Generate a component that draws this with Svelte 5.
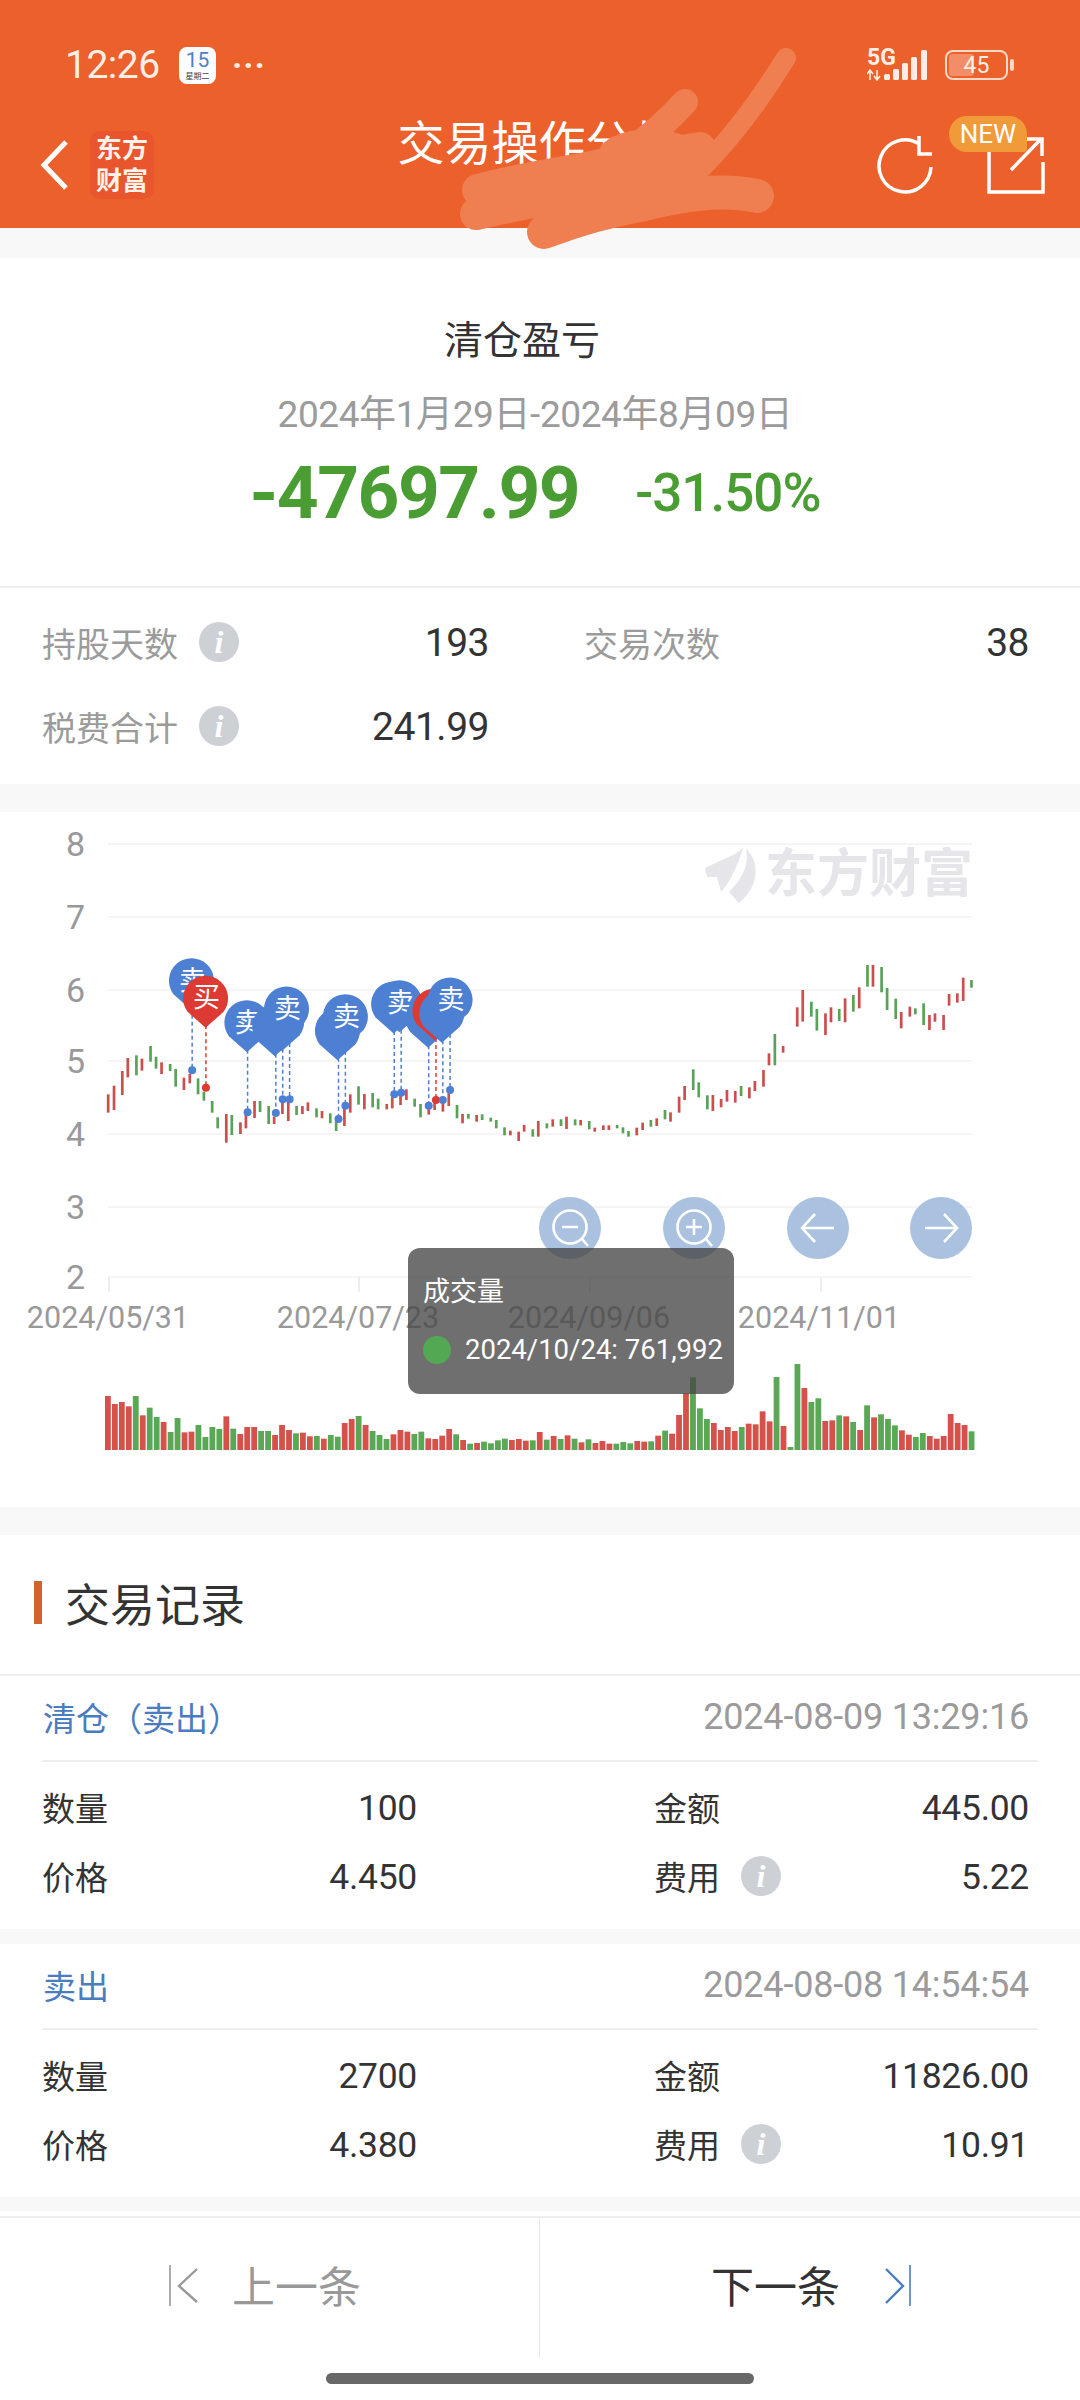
<script>
  // candles: x (zoom units), top, bottom, r/g
  const candleSrc = `314 853 908 r,331 827 900 r,355 783 855 r,371 744 802 r,396 736 796 g,412 746 782 r,437 708 755 g,453 740 776 g,469 757 792 r,494 762 783 g,510 777 830 g,534 803 840 r,551 792 820 r,575 805 853 g,592 845 872 g,616 873 908 g,632 922 955 g,657 912 998 r,673 915 975 g,698 937 972 r,714 915 955 r,739 873 924 r,755 873 906 g,780 888 942 g,796 920 942 r,820 870 912 r,837 875 933 r,861 888 915 g,878 888 912 r,894 877 903 r,919 895 922 g,935 903 925 r,959 910 940 g,976 935 963 g,1000 895 948 r,1017 853 908 r,1041 829 884 g,1058 852 898 r,1082 849 892 g,1098 866 898 g,1123 882 898 r,1139 862 895 r,1163 850 885 r,1180 838 870 r,1204 866 890 g,1221 882 922 g,1245 890 914 r,1262 875 900 r,1286 875 905 r,1303 850 888 r,1327 885 925 g,1343 912 940 r,1360 912 926 g,1384 915 935 r,1400 913 930 g,1425 923 935 g,1441 930 955 g,1465 952 976 g,1482 962 976 r,1506 965 993 r,1522 945 965 r,1547 958 980 g,1563 933 980 r,1588 940 955 g,1605 928 950 r,1629 928 948 g,1645 920 957 r,1670 928 946 g,1686 930 946 r,1711 933 958 g,1727 953 965 r,1752 946 960 r,1768 946 960 r,1792 945 955 g,1809 952 970 g,1825 963 980 g,1849 953 976 r,1866 938 960 r,1890 930 950 g,1907 925 948 r,1931 900 928 g,1947 907 935 r,1972 860 908 r,1988 828 870 r,2013 778 840 g,2029 817 862 g,2054 856 898 g,2070 855 903 r,2094 867 892 r,2111 840 875 r,2135 843 878 r,2152 828 858 g,2176 832 865 r,2192 813 843 r,2217 780 830 r,2233 730 766 r,2250 672 766 g,2274 708 728 r,2315 592 650 r,2331 540 635 r,2356 575 620 g,2372 597 662 g,2397 610 675 r,2413 592 637 r,2437 597 633 g,2454 565 637 r,2478 555 605 g,2495 532 595 r,2519 465 530 g,2535 465 530 r,2560 471 547 g,2576 534 600 g,2601 566 627 g,2617 606 655 r,2642 590 620 r,2658 595 613 g,2682 580 645 g,2699 615 660 r,2715 610 635 r,2740 615 660 r,2756 552 587 r,2780 550 578 r,2797 503 573 r,2821 510 533 g`;
  const candles = candleSrc.split(",").map((s) => {
    const [x, a, b, c] = s.split(" ");
    return { x: +x / 2.904, y: 810 + a / 3, h: (b - a) / 3, c };
  });

  // volume bars: top in zoom units, left to right
  const volSrc = `468r 492r 486r 499r 468g 526r 503g 531g 546r 576g 534g 577r 575r 555g 591g 561g 567g 529r 566g 582r 561r 561r 573g 573g 585r 555r 570r 580g 578r 589r 588g 596r 585g 590g 549r 537r 528g 555r 573g 585g 597g 583r 570r 575r 582g 575g 595r 597r 587r 567r 583g 600r 611g 609r 605g 610g 601g 596g 600r 597r 602r 601g 576r 599g 588r 597g 586r 596g 607r 598g 609r 603r 611r 611g 606g 610g 603r 605r 604g 587r 572g 581r 525r 460r 412g 505g 537g 549r 570r 561r 573r 561g 551r 553r 514r 544r 411g 558r 621g 372g 444r 486g 475g 543r 541r 526g 529r 546g 570r 496g 532r 523g 537g 556g 571r 584r 591g 579g 588r 596r 588r 522r 549r 555r 574g`;
  const bars = volSrc.split(" ").map((s, i) => {
    const top = parseInt(s);
    return { x: 105 + i * 6.965, y: 1240 + top / 3, h: 210 - top / 3, c: s.slice(-1) };
  });

  const yLabels = [
    ["8", 844], ["7", 917], ["6", 990], ["5", 1061], ["4", 1134], ["3", 1207], ["2", 1277],
  ];
  const xLabels = [["2024/05/31", 108], ["2024/07/23", 358], ["2024/09/06", 589], ["2024/11/01", 819]];
  const ticks = [108, 358, 589, 820];

  // pins: line x, circle x, circle y, dot y, type, has label (zoom units)
  const pinSrc = [
    [558, 556, 512, 781, "s", 1],
    [598, 597, 565, 833, "b", 1],
    [719, 717, 638, 907, "s", 1],
    [801, 798, 650, 909, "s", 0],
    [821, 818, 635, 868, "s", 0],
    [841, 832, 597, 868, "s", 1],
    [983, 980, 662, 927, "s", 0],
    [1003, 1003, 620, 887, "s", 1],
    [1145, 1143, 582, 853, "s", 0],
    [1165, 1160, 578, 848, "s", 1],
    [1245, 1243, 625, 887, "s", 0],
    [1266, 1263, 603, 870, "b", 0],
    [1286, 1283, 610, 870, "s", 0],
    [1307, 1307, 570, 840, "s", 1],
  ];
  const pins = pinSrc.map(([lx, cx, cy, dy, type, label]) => ({
    lx: lx / 2.904,
    cx: cx / 2.904,
    cy: 810 + cy / 3,
    dy: 810 + dy / 3,
    color: type === "b" ? "#dd3a33" : "#4d7fd2",
    text: type === "b" ? "买" : "卖",
    label,
  }));

  function pinPath(p) {
    const r = 22.5;
    const dx = r * 0.8;
    const sy = p.cy + r * 0.6;
    return `M${p.cx - dx} ${sy}A${r} ${r} 0 1 1 ${p.cx + dx} ${sy}L${p.cx} ${p.cy + r + 7}Z`;
  }

  const stats = [
    { label: "持股天数", info: true, value: "193" },
    { label: "交易次数", info: false, value: "38" },
    { label: "税费合计", info: true, value: "241.99" },
  ];

  const records = [
    { type: "清仓（卖出）", time: "2024-08-09 13:29:16", qty: "100", amount: "445.00", price: "4.450", fee: "5.22" },
    { type: "卖出", time: "2024-08-08 14:54:54", qty: "2700", amount: "11826.00", price: "4.380", fee: "10.91" },
  ];
</script>

{#snippet info()}
  <span class="info">i</span>
{/snippet}

<div class="page">
  <header class="top">
    <div class="status">
      <div class="status-left">
        <span class="clock">12:26</span>
        <span class="cal"><b>15</b><i>星期二</i></span>
        <span class="dots">···</span>
      </div>
      <div class="status-right">
        <svg width="64" height="34" viewBox="0 0 64 34">
          <text x="0" y="17" class="fiveg">5G</text>
          <path d="M3 22v10M0 26l3-4 3 4M10 32V22M7 28l3 4 3-4" stroke="#fdeee5" stroke-width="1.6" fill="none" />
          <g fill="#fdeee5">
            <rect x="17" y="26" width="6" height="6" rx="1.5" />
            <rect x="26" y="21" width="6" height="11" rx="1.5" />
            <rect x="35" y="15" width="6" height="17" rx="1.5" />
            <rect x="44" y="9" width="6" height="23" rx="1.5" />
            <rect x="54" y="2" width="6" height="30" rx="1.5" />
          </g>
        </svg>
        <span class="battery"><span class="battery-fill"></span><span class="battery-num">45</span></span>
        <span class="nub"></span>
      </div>
    </div>
    <nav class="nav">
      <div class="nav-left">
        <svg width="30" height="50" viewBox="0 0 30 50">
          <path d="M26 2L4 25l22 23" fill="none" stroke="#fff" stroke-width="5" />
        </svg>
        <span class="logo">东方<br />财富</span>
      </div>
      <h1>交易操作分析</h1>
      <div class="nav-right">
        <svg width="58" height="60" viewBox="0 0 58 60">
          <path d="M42 9A26 26 0 1 0 54 32" fill="none" stroke="#fff" stroke-width="3.5" />
          <path d="M42 1V19H55" fill="none" stroke="#fff" stroke-width="3.5" />
        </svg>
        <span class="share">
          <svg width="58" height="58" viewBox="0 0 58 58">
            <path d="M32 8H2V56H56V26" fill="none" stroke="#fff" stroke-width="3.5" />
            <path d="M24 34L54 3M38 3H55V20" fill="none" stroke="#fff" stroke-width="3.5" />
          </svg>
          <span class="new">NEW</span>
        </span>
      </div>
    </nav>
  </header>

  <section class="summary">
    <div class="sum-title">清仓盈亏</div>
    <div class="sum-date">2024年1月29日-2024年8月09日</div>
    <div class="sum-nums">
      <span class="big">-47697.99</span>
      <span class="pct">-31.50%</span>
    </div>
  </section>

  <section class="stats">
    {#each stats as s}
      <div class="stat">
        <span class="stat-label">{s.label}</span>
        {#if s.info}{@render info()}{/if}
        <span class="stat-val">{s.value}</span>
      </div>
    {/each}
  </section>

  <section class="chart">
    <svg width="1080" height="695" viewBox="0 812 1080 695">
      <!-- watermark -->
      <g fill="#e6e6ea">
        <path d="M705 868C720 860 735 856 743 848C737 868 729 884 721 892L717 877L707 877Z" />
        <path d="M746 849C759 860 761 885 739 903L729 892C743 878 749 865 746 849Z" />
      </g>
      <text x="765" y="892" class="mark">东方财富</text>

      {#each yLabels as [t, y]}
        <rect x="108" y={y - 1} width="864" height="2" fill="#f5f5f5" />
        <text x="85" y={y + 12} class="ylab" text-anchor="end">{t}</text>
      {/each}
      {#each ticks as x}
        <rect {x} y="1277" width="2" height="15" fill="#ededed" />
      {/each}
      {#each xLabels as [t, x]}
        <text {x} y="1328" class="axis" text-anchor="middle">{t}</text>
      {/each}

      {#each candles as k}
        <rect x={k.x - 1.3} y={k.y} width="2.7" height={k.h} fill={k.c === "r" ? "#cb4f4e" : "#5aa258"} />
      {/each}

      {#each bars as b}
        <rect x={b.x} y={b.y} width="5.8" height={b.h} fill={b.c === "r" ? "#d5524c" : "#5aa855"} />
      {/each}

      {#each pins as p}
        <line x1={p.lx} x2={p.lx} y1={p.cy + 20} y2={p.dy} stroke={p.color} stroke-width="1.5" stroke-dasharray="4 3" />
        <circle cx={p.lx} cy={p.dy} r="4" fill={p.color} />
      {/each}
      {#each pins as p}
        <path d={pinPath(p)} fill={p.color} />
        {#if p.label}
          <text x={p.cx + 1} y={p.cy + 9} class="pin-text" text-anchor="middle">{p.text}</text>
        {/if}
      {/each}

      <g fill="#aac1e0">
        <circle cx="570" cy="1228" r="31" />
        <circle cx="694" cy="1228" r="31" />
        <circle cx="818" cy="1228" r="31" />
        <circle cx="941" cy="1228" r="31" />
      </g>
      <g fill="none" stroke="#fff" stroke-width="2.6">
        <circle cx="570" cy="1227" r="16.5" />
        <path d="M562 1227H578M582 1239L588 1246" />
        <circle cx="694" cy="1227" r="16.5" />
        <path d="M686 1227H702M694 1219V1235M706 1239L712 1246" />
        <path d="M802 1228H834M815 1214L802 1228L815 1242" />
        <path d="M925 1228H957M944 1214L957 1228L944 1242" />
      </g>
    </svg>
    <div class="tooltip">
      <div class="tip-title">成交量</div>
      <div class="tip-row"><span class="tip-dot"></span>2024/10/24: 761,992</div>
    </div>
  </section>

  <section class="heading">
    <span class="heading-bar"></span>
    <h2>交易记录</h2>
  </section>

  {#each records as r}
    <section class="record">
      <div class="rec-head">
        <span class="rec-type">{r.type}</span>
        <span class="rec-time">{r.time}</span>
      </div>
      <div class="rec-body">
        <div class="cell"><span>数量</span><em>{r.qty}</em></div>
        <div class="cell"><span>金额</span><em>{r.amount}</em></div>
        <div class="cell"><span>价格</span><em>{r.price}</em></div>
        <div class="cell"><span>费用</span>{@render info()}<em>{r.fee}</em></div>
      </div>
    </section>
  {/each}

  <footer class="foot">
    <div class="foot-bar">
      <div class="pager prev">
        <svg width="30" height="42" viewBox="0 0 30 42">
          <path d="M1 0V41" stroke="#999" stroke-width="1.6" />
          <path d="M28 4L10 21l18 16" fill="none" stroke="#999" stroke-width="2.4" />
        </svg>
        <span>上一条</span>
      </div>
      <div class="pager next">
        <span>下一条</span>
        <svg width="28" height="42" viewBox="0 0 28 42">
          <path d="M2 4L19 21 2 38" fill="none" stroke="#4a7cc0" stroke-width="2.4" />
          <path d="M26 0V41" stroke="#4a7cc0" stroke-width="1.6" />
        </svg>
      </div>
    </div>
    <div class="home"></div>
  </footer>

  <svg class="scribble" width="1080" height="260" viewBox="0 0 1080 260">
    <rect x="565" y="198" width="14" height="10" fill="#fff" />
    <g fill="none" stroke="#ef7f50" stroke-linecap="round" stroke-linejoin="round">
      <path d="M786 58C760 100 730 140 700 170" stroke-width="20" />
      <path d="M685 102C650 140 620 160 590 170" stroke-width="26" />
      <path d="M478 190C520 178 570 172 600 165L700 148" stroke-width="32" />
      <path d="M476 214C540 200 620 185 690 176" stroke-width="32" />
      <path d="M544 232C570 222 600 212 640 205C680 195 720 188 757 196" stroke-width="34" />
    </g>
    <ellipse cx="650" cy="155" rx="52" ry="26" fill="#ef7f50" />
  </svg>
</div>

<style>
  :global(body) {
    background: #f8f8f8;
  }

  .page {
    position: relative;
    width: 1080px;
    height: 2400px;
    overflow: hidden;
    font-family: Roboto, "Noto Sans CJK SC", sans-serif;
    color: #333;
  }

  .top {
    height: 228px;
    background: #ec602c;
    color: #fff;
    box-sizing: border-box;
    padding-top: 46px;
  }

  .status {
    height: 38px;
    display: flex;
    justify-content: space-between;
    align-items: center;
    padding: 0 66px 0 65px;
    color: #fdeee5;
  }

  .status-left,
  .status-right {
    display: flex;
    align-items: center;
  }

  .clock {
    font-size: 39px;
    width: 114px;
    letter-spacing: -0.5px;
  }

  .cal {
    width: 37px;
    height: 37px;
    border-radius: 8px;
    background: #fbfcfe;
    display: flex;
    flex-direction: column;
    align-items: center;
    line-height: 1;
  }

  .cal b {
    font-weight: 400;
    font-size: 21px;
    color: #4f7fc4;
    margin-top: 3px;
  }

  .cal i {
    font-style: normal;
    font-size: 8px;
    color: #444;
    margin-top: 2px;
  }

  .dots {
    font-size: 34px;
    font-weight: 700;
    margin-left: 16px;
    letter-spacing: 1px;
    line-height: 1;
  }

  .fiveg {
    font-size: 23px;
    font-weight: 700;
    fill: #fdeee5;
  }

  .battery {
    position: relative;
    width: 63px;
    height: 30px;
    margin-left: 14px;
    box-sizing: border-box;
    border: 2.5px solid #fbd9c6;
    border-radius: 8px;
    display: flex;
    align-items: center;
    justify-content: center;
  }

  .battery-fill {
    position: absolute;
    left: 2px;
    top: 2px;
    bottom: 2px;
    width: 25px;
    border-radius: 3px;
    background: #f28d68;
  }

  .battery-num {
    position: relative;
    font-size: 23px;
    color: #fdeee5;
  }

  .nub {
    width: 4px;
    height: 12px;
    margin-left: 2px;
    border-radius: 2px;
    background: #fbd9c6;
  }

  .nav {
    display: grid;
    grid-template-columns: 1fr auto 1fr;
    align-items: center;
    padding: 47px 35px 0 40px;
  }

  .nav-left,
  .nav-right {
    display: flex;
    align-items: center;
  }

  .nav-left {
    gap: 20px;
  }

  .nav-right {
    justify-content: flex-end;
    gap: 52px;
  }

  .logo {
    width: 64px;
    height: 68px;
    border-radius: 10px;
    background: #e9552d;
    font-size: 26px;
    font-weight: 700;
    line-height: 32px;
    text-align: center;
    box-sizing: border-box;
    padding-top: 2px;
    color: #fff2ea;
  }

  h1 {
    margin: -42px 8px 0 0;
    font-size: 47px;
    font-weight: 400;
    line-height: 60px;
  }

  .share {
    position: relative;
    display: block;
    height: 58px;
  }

  .new {
    position: absolute;
    left: -38px;
    top: -20px;
    width: 78px;
    height: 36px;
    border-radius: 18px 18px 3px 18px;
    background: #f09a3a;
    color: #fff;
    font-size: 26px;
    line-height: 36px;
    text-align: center;
  }

  .summary {
    margin-top: 30px;
    height: 328px;
    background: #fff;
    box-sizing: border-box;
    padding-top: 60px;
    display: flex;
    flex-direction: column;
    align-items: center;
  }

  .sum-title {
    font-size: 39px;
    line-height: 46px;
    color: #333;
    margin-left: -36px;
  }

  .sum-date {
    font-size: 37px;
    line-height: 40px;
    margin: 31px 0 0 -10px;
    color: #9b9b9b;
    letter-spacing: -0.4px;
  }

  .sum-nums {
    margin: 18px 0 0 -10px;
    height: 80px;
    display: flex;
    align-items: center;
    gap: 56px;
    color: #4a9d32;
  }

  .big {
    font-size: 73px;
    font-weight: 700;
    letter-spacing: -1.5px;
  }

  .pct {
    font-size: 53px;
    font-weight: 500;
    letter-spacing: -1px;
  }

  .stats {
    height: 198px;
    background: #fff;
    border-top: 2px solid #eee;
    box-sizing: border-box;
    padding: 12px 50px 0 42px;
    display: grid;
    grid-template-columns: 447px 445px;
    column-gap: 95px;
    grid-auto-rows: 84px;
  }

  .stat {
    display: flex;
    align-items: center;
  }

  .stat-label {
    font-size: 34px;
    color: #9b9b9b;
  }

  .stat-val {
    margin: 2px 0 0 auto;
    font-size: 39px;
    color: #333;
    letter-spacing: -0.5px;
  }

  .info {
    flex-shrink: 0;
    width: 40px;
    height: 40px;
    border-radius: 50%;
    background: #cdd1d6;
    color: #fff;
    font-family: "Liberation Serif", serif;
    font-style: italic;
    font-weight: 700;
    font-size: 32px;
    line-height: 40px;
    text-align: center;
    margin-left: 21px;
  }

  .chart {
    position: relative;
    margin-top: 28px;
    height: 695px;
    background: #fff;
  }

  .chart svg {
    display: block;
  }

  .mark {
    font-size: 52px;
    font-weight: 700;
    fill: #e6e6ea;
  }

  .axis {
    font-size: 30.5px;
    fill: #999;
  }

  .ylab {
    font-size: 34px;
    fill: #999;
  }

  .pin-text {
    font-size: 27px;
    fill: #fff;
  }

  .tooltip {
    position: absolute;
    left: 408px;
    top: 436px;
    width: 326px;
    height: 146px;
    box-sizing: border-box;
    padding: 26px 15px 0;
    border-radius: 12px;
    background: rgba(70, 70, 70, 0.78);
    color: #fff;
  }

  .tip-title {
    font-size: 27px;
    line-height: 36px;
  }

  .tip-row {
    display: flex;
    align-items: center;
    margin-top: 21px;
    font-size: 27.5px;
    line-height: 38px;
    white-space: nowrap;
  }

  .tip-dot {
    flex-shrink: 0;
    width: 28px;
    height: 28px;
    border-radius: 50%;
    background: #53a853;
    margin-right: 14px;
  }

  .heading {
    margin-top: 28px;
    height: 141px;
    background: #fff;
    border-bottom: 2px solid #eee;
    box-sizing: border-box;
    display: flex;
    align-items: center;
    padding: 0 0 4px 34px;
  }

  .heading-bar {
    width: 8px;
    height: 43px;
    background: #d2622e;
  }

  h2 {
    margin: 0 0 0 23px;
    font-size: 45px;
    font-weight: 400;
    color: #333;
  }

  .record {
    background: #fff;
    padding-bottom: 19px;
  }

  .record + .record {
    margin-top: 15px;
  }

  .rec-head {
    height: 82px;
    margin: 0 42px;
    border-bottom: 2px solid #eee;
    display: flex;
    justify-content: space-between;
    align-items: center;
    padding: 0 9px 2px 1px;
  }

  .rec-type {
    font-size: 33px;
    color: #4a7cc0;
  }

  .rec-time {
    font-size: 36px;
    color: #9b9b9b;
    letter-spacing: -0.2px;
  }

  .rec-body {
    padding: 10px 51px 0 42px;
    display: grid;
    grid-template-columns: 375px 375px;
    column-gap: 237px;
    grid-auto-rows: 69px;
  }

  .cell {
    display: flex;
    align-items: center;
    font-size: 33px;
    color: #333;
  }

  .cell em {
    margin: 3px 0 0 auto;
    font-style: normal;
    font-size: 35.5px;
    letter-spacing: -0.3px;
  }

  .foot {
    margin-top: 14px;
    height: 189px;
    background: #fff;
    padding-top: 5px;
    box-sizing: border-box;
  }

  .foot-bar {
    height: 140px;
    border-top: 2px solid #eee;
    display: grid;
    grid-template-columns: 1fr 1fr;
  }

  .pager {
    display: flex;
    align-items: center;
    font-size: 43px;
    padding-bottom: 8px;
  }

  .prev {
    border-right: 1px solid #e8e8e8;
    color: #999;
    padding-left: 169px;
    gap: 33px;
  }

  .next {
    color: #333;
    padding-left: 171px;
    gap: 44px;
  }

  .prev svg,
  .next svg {
    margin-top: 4px;
  }

  .home {
    width: 428px;
    height: 11px;
    border-radius: 6px;
    background: #686868;
    margin: 15px auto 0;
  }

  .scribble {
    position: absolute;
    left: 0;
    top: 0;
  }
</style>
